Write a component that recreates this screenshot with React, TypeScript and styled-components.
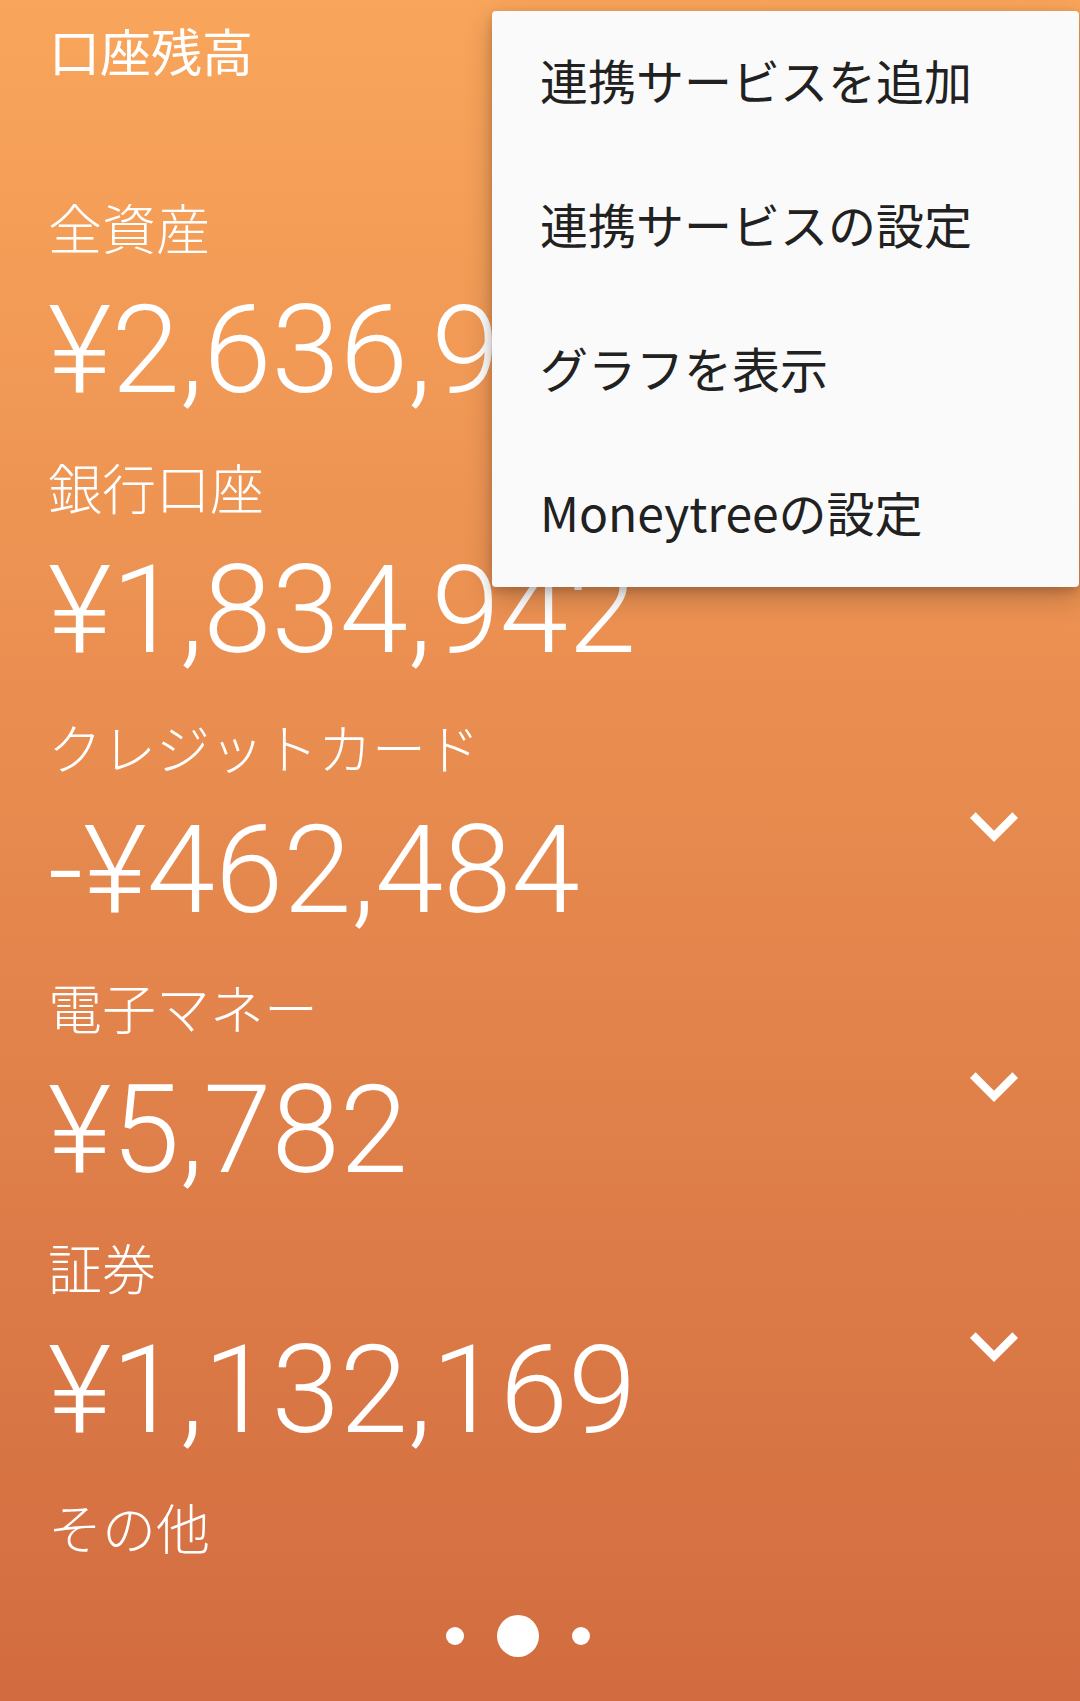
import styled, { createGlobalStyle } from "styled-components";

const GlobalStyle = createGlobalStyle`
    html, body {
        margin: 0;
        padding: 0;
    }
    body {
        font-family: "Noto Sans CJK JP", "Noto Sans", sans-serif;
    }
`;

const Screen = styled.div`
    position: relative;
    width: 1080px;
    height: 1701px;
    overflow: hidden;
    background: linear-gradient(180deg, #f9a55b 0%, #e6894e 50%, #d26c40 100%);
    color: #fff;
`;

const Header = styled.header`
    height: 176px;
    box-sizing: border-box;
    padding: 24px 0 0 49px;
`;

const Title = styled.h1`
    margin: 0;
    font-size: 51px;
    line-height: 52px;
    font-weight: 400;
`;

const AccountList = styled.ul`
    list-style: none;
    margin: 0;
    padding: 0;
    height: 1410px;
    overflow: hidden;
`;

const Row = styled.li`
    display: flex;
    align-items: center;
    height: 260px;
    box-sizing: border-box;
    padding: 24px 38px 24px 48px;
`;

const Info = styled.div`
    flex: 1;
    align-self: stretch;
    display: flex;
    flex-direction: column;
    gap: 35px;
`;

const Label = styled.span`
    font-size: 54px;
    line-height: 54px;
    font-weight: 300;
`;

const Amount = styled.span`
    font-family: Roboto, "Noto Sans CJK JP", sans-serif;
    font-size: 123px;
    line-height: 123px;
    font-weight: 300;
    white-space: nowrap;
`;

const Chevron = styled.svg`
    width: 96px;
    height: 96px;
    flex-shrink: 0;
    fill: #fff;
`;

const Indicator = styled.div`
    height: 100px;
    display: flex;
    align-items: center;
    justify-content: center;
    gap: 33px;
    padding-right: 45px;
`;

const Dot = styled.span<{ $active?: boolean }>`
    width: ${(p) => (p.$active ? 42 : 18)}px;
    height: ${(p) => (p.$active ? 42 : 18)}px;
    border-radius: 50%;
    background-color: #fff;
`;

const Menu = styled.ul`
    position: absolute;
    top: 11px;
    right: 1px;
    width: 587px;
    margin: 0;
    padding: 0;
    list-style: none;
    background-color: #fafafa;
    border-radius: 4px;
    box-shadow: 0 10px 28px rgba(0, 0, 0, 0.22), 0 4px 10px rgba(0, 0, 0, 0.16);
`;

const MenuItem = styled.li`
    height: 144px;
    box-sizing: border-box;
    display: flex;
    align-items: center;
    padding: 0 0 8px 48px;
    font-size: 48px;
    line-height: 48px;
    color: #212121;
`;

const accounts = [
    { name: "全資産", amount: "¥2,636,942", expandable: false },
    { name: "銀行口座", amount: "¥1,834,942", expandable: true },
    { name: "クレジットカード", amount: "-¥462,484", expandable: true },
    { name: "電子マネー", amount: "¥5,782", expandable: true },
    { name: "証券", amount: "¥1,132,169", expandable: true },
    { name: "その他", amount: "", expandable: false },
];

const menuItems = ["連携サービスを追加", "連携サービスの設定", "グラフを表示", "Moneytreeの設定"];

export default function App() {
    return (
        <>
            <GlobalStyle />
            <Screen>
                <Header>
                    <Title>口座残高</Title>
                </Header>
                <AccountList>
                    {accounts.map((a) => (
                        <Row key={a.name}>
                            <Info>
                                <Label>{a.name}</Label>
                                {a.amount && <Amount>{a.amount}</Amount>}
                            </Info>
                            {a.expandable && (
                                <Chevron viewBox="0 0 24 24">
                                    <path d="M16.59 8.59L12 13.17 7.41 8.59 6 10l6 6 6-6z" />
                                </Chevron>
                            )}
                        </Row>
                    ))}
                </AccountList>
                <Indicator>
                    <Dot />
                    <Dot $active />
                    <Dot />
                </Indicator>
                <Menu>
                    {menuItems.map((item) => (
                        <MenuItem key={item}>{item}</MenuItem>
                    ))}
                </Menu>
            </Screen>
        </>
    );
}
